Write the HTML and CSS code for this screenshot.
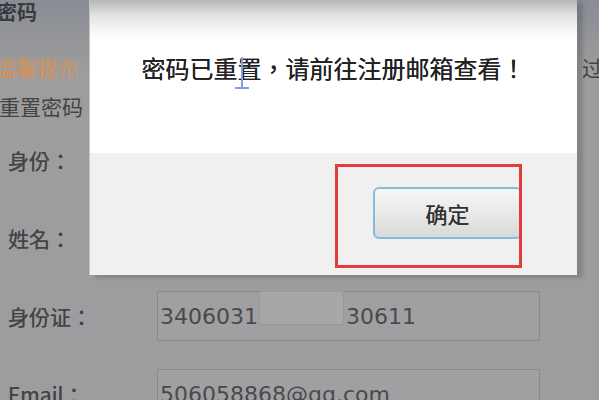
FILE: index.html
```html
<!DOCTYPE html>
<html lang="zh-TW">
<head>
    <meta charset="UTF-8">
    <meta name="viewport" content="width=device-width, initial-scale=1.0">
    <title>重置密码</title>
    <link rel="stylesheet" href="styles.css">
</head>
<body>
    <div class="page">
        <div class="form">
            <div class="form-title">密码</div>
            <div class="tip-line">
                <span class="tip">温馨提示</span>
                <span class="tip-end">过</span>
            </div>
            <div class="sub-title">重置密码</div>

            <div class="row">
                <span class="label">身份：</span>
            </div>
            <div class="row">
                <span class="label">姓名：</span>
            </div>
            <div class="row">
                <span class="label">身份证：</span>
                <div class="field">3406031<span class="mask"></span>30611</div>
            </div>
            <div class="row">
                <span class="label">Email：</span>
                <div class="field">506058868@qq.com</div>
            </div>
        </div>

        <!-- 弹窗 -->
        <div class="dialog">
            <div class="dialog-body">
                <p class="dialog-msg">密码已重置，请前往注册邮箱查看！</p>
                <svg class="ibeam" width="18" height="36" viewBox="0 0 18 36">
                    <path d="M9 2 V33 M2 33 H16" stroke="#7f9fd8" stroke-width="2" fill="none"/>
                </svg>
            </div>
            <div class="dialog-foot">
                <button class="ok-btn">确定</button>
            </div>
        </div>

        <div class="mark"></div>
    </div>
</body>
</html>
```

FILE: styles.css
```css
body {
    margin: 0;
    font-family: "Noto Sans CJK TC", "Noto Sans", sans-serif;
    background-color: #9d9c9f;
}

.page {
    position: relative;
    width: 599px;
    height: 400px;
    overflow: hidden;
    background: linear-gradient(#888c95 0, #959699 40px, #9d9c9f 70px);
}

.form {
    display: flex;
    flex-direction: column;
}

.form-title {
    margin-left: -3px;
    font-size: 20px;
    line-height: 24px;
    font-weight: bold;
    color: #3a3a3e;
}

.tip-line {
    display: flex;
    justify-content: space-between;
    margin-top: 28px;
    margin-left: -5px;
    margin-right: -4px;
    font-size: 21px;
    line-height: 30px;
}

.tip {
    color: #d9904c;
}

.tip-end {
    color: #444;
}

.sub-title {
    margin-top: 9px;
    margin-left: -1px;
    font-size: 21px;
    line-height: 30px;
    color: #444;
}

.row {
    display: flex;
    align-items: center;
    height: 78px;
    padding-left: 8px;
}

.row:first-of-type {
    margin-top: 5px;
}

.label {
    width: 149px;
    font-size: 21px;
    color: #444;
    text-shadow: 0 0 0.5px #444;
}

.field {
    display: flex;
    align-items: center;
    width: 383px;
    height: 50px;
    box-sizing: border-box;
    padding-left: 2px;
    border: 1px solid #8a8a8c;
    background-color: #a0a0a2;
    font-family: "DejaVu Sans", sans-serif;
    font-size: 22px;
    color: #4a4a4c;
}

.mask {
    display: inline-block;
    width: 85px;
    height: 34px;
    margin: 0 2px 16px 1px;
    background-color: #a7a7a8;
    border: 1px solid #999;
    box-sizing: border-box;
}

.dialog {
    position: absolute;
    left: 89px;
    top: 0;
    width: 488px;
    height: 275px;
    display: flex;
    flex-direction: column;
    border-left: 1px solid #c4c4c4;
    box-sizing: border-box;
    box-shadow: 6px 3px 4px rgba(0, 0, 0, 0.16);
}

.dialog-body {
    position: relative;
    height: 153px;
    background: linear-gradient(#b6b6b8 0, #e4e4e4 16px, #ffffff 38px);
    text-align: center;
}

.dialog-msg {
    margin: 53px 0 0;
    font-size: 24px;
    line-height: 30px;
    color: #222;
    text-shadow: 0 0 0.6px #222;
}

.ibeam {
    position: absolute;
    left: 143px;
    top: 55px;
}

.dialog-foot {
    flex: 1;
    display: flex;
    justify-content: flex-end;
    align-items: flex-start;
    padding: 34px 55px 0 0;
    background-color: #f0f0f0;
}

.ok-btn {
    width: 149px;
    height: 52px;
    border: 2px solid #86bbdc;
    border-radius: 6px;
    background: linear-gradient(#f6f6f6, #e9e9e9 50%, #d9d9d9);
    font-family: "Noto Sans CJK TC", sans-serif;
    font-size: 22px;
    color: #333;
    text-shadow: 0 0 0.5px #333;
    cursor: pointer;
}

.mark {
    position: absolute;
    left: 335px;
    top: 164px;
    width: 187px;
    height: 104px;
    box-sizing: border-box;
    border: 3px solid #e23c3c;
}
```
